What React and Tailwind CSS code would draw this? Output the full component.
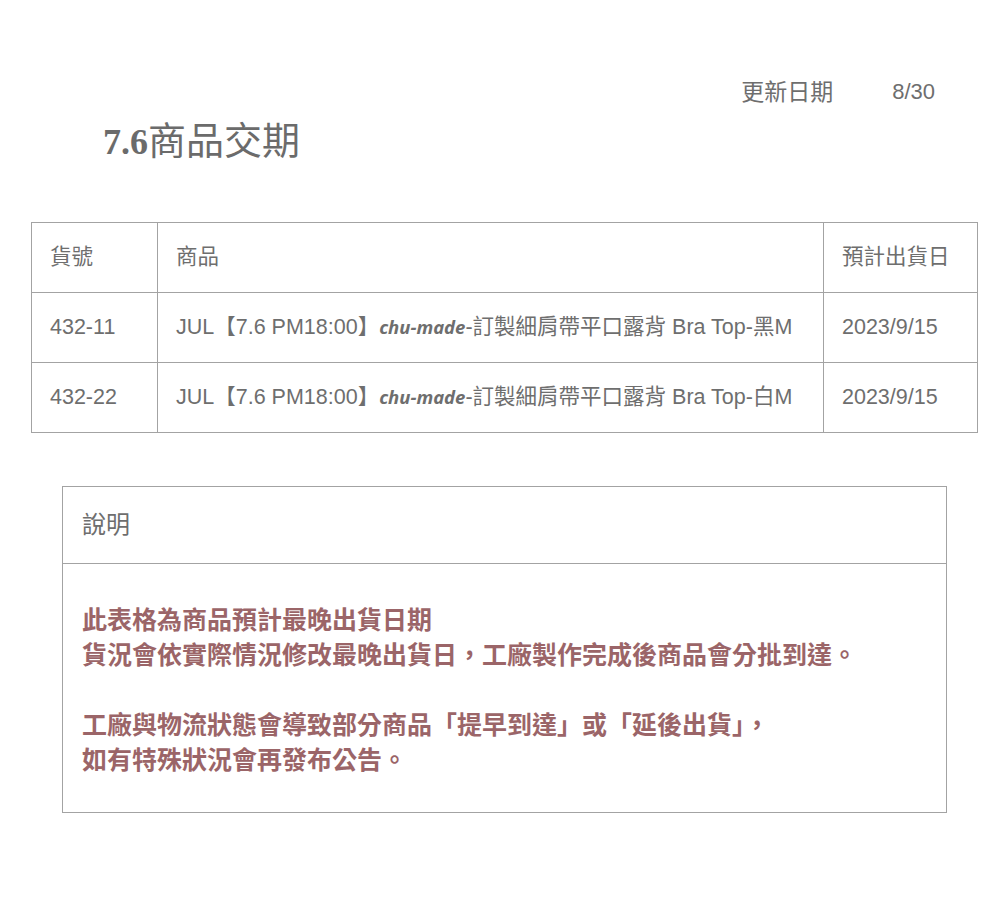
export default function App() {
  const rows = [
    { id: "432-11", color: "黑M" },
    { id: "432-22", color: "白M" },
  ];
  const sans = { fontFamily: '"Liberation Sans", "Noto Sans CJK TC", sans-serif' };
  return (
    <div className="w-[1006px] h-[914px] bg-white text-[#6e6e6e]" style={sans}>
      <div className="pt-[77px] flex justify-end pr-[71px] text-[23px] leading-[30px]">
        <span>更新日期</span>
        <span className="ml-[59px] text-[22px]">8/30</span>
      </div>
      <h1 className="ml-[103px] mt-[10px] text-[38px] leading-[48px] font-normal text-[#6b6b6b] flex items-baseline">
        <span className="font-bold text-[36px]" style={{ fontFamily: '"Liberation Serif", serif' }}>7.6</span>
        <span>商品交期</span>
      </h1>
      <table className="ml-[31px] mt-[56px] w-[947px] border-collapse text-[21.5px] table-fixed">
        <colgroup>
          <col className="w-[126px]" />
          <col className="w-[666px]" />
          <col className="w-[154px]" />
        </colgroup>
        <tbody>
          <tr className="h-[70px]">
            <td className="border border-[#a3a3a3] pl-[18px]">貨號</td>
            <td className="border border-[#a3a3a3] pl-[18px]">商品</td>
            <td className="border border-[#a3a3a3] pl-[18px]">預計出貨日</td>
          </tr>
          {rows.map((r) => (
            <tr key={r.id} className="h-[70px]">
              <td className="border border-[#a3a3a3] pl-[18px]">{r.id}</td>
              <td className="border border-[#a3a3a3] pl-[18px] whitespace-nowrap">
                JUL【7.6 PM18:00】
                <span className="italic font-bold text-[18.5px]" style={{ fontFamily: '"Open Sans", sans-serif' }}>chu-made</span>
                -訂製細肩帶平口露背 Bra Top-{r.color}
              </td>
              <td className="border border-[#a3a3a3] pl-[18px]">2023/9/15</td>
            </tr>
          ))}
        </tbody>
      </table>
      <div className="ml-[62px] mt-[53px] w-[885px] border border-[#a3a3a3]">
        <div className="h-[77px] flex items-center pl-[19px] text-[24px] border-b border-[#a3a3a3]">說明</div>
        <div className="pl-[19px] pt-[37px] pb-[36px] text-[25px] leading-[35px] font-bold text-[#9b6568]" style={{ fontFamily: '"Noto Sans CJK TC", sans-serif' }}>
          <p>此表格為商品預計最晚出貨日期</p>
          <p>貨況會依實際情況修改最晚出貨日，工廠製作完成後商品會分批到達。</p>
          <p>&nbsp;</p>
          <p>工廠與物流狀態會導致部分商品「提早到達」或「延後出貨」，</p>
          <p>如有特殊狀況會再發布公告。</p>
        </div>
      </div>
    </div>
  );
}
